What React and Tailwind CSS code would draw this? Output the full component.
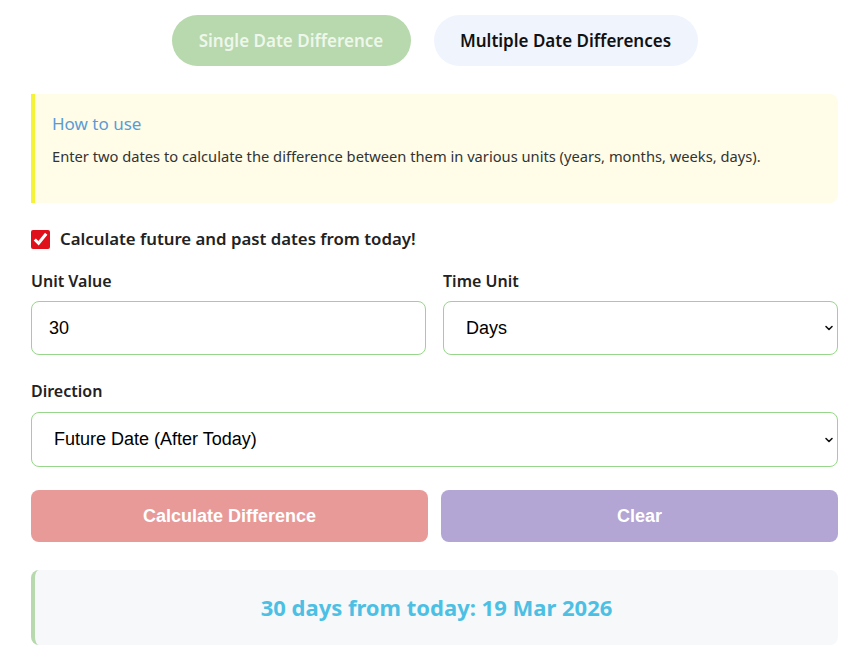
import { useState } from 'react'

const ui = { fontFamily: '"Noto Sans", "Open Sans", sans-serif' }
const arial = { fontFamily: '"Liberation Sans", Arial, sans-serif' }

function Chevron() {
  return (
    <svg width="10" height="10" viewBox="0 0 10 10" className="absolute right-[4px] top-1/2 -translate-y-1/2 pointer-events-none">
      <path d="M2 3.5 L5 6.5 L8 3.5" fill="none" stroke="#111" strokeWidth="1.6" strokeLinecap="round" strokeLinejoin="round" />
    </svg>
  )
}

export default function App() {
  const [checked, setChecked] = useState(true)

  return (
    <div className="min-h-[663px] bg-white text-[#333] pl-[31px] pr-[29px]" style={ui}>
      <div className="flex justify-center gap-[23px] pt-[15px]">
        <button className="w-[239px] h-[51px] rounded-full bg-[#b8d8ad] text-[#eef7eb] text-[17px] font-semibold">
          Single Date Difference
        </button>
        <button className="w-[264px] h-[51px] rounded-full bg-[#f0f4fd] text-[#111] text-[17px] font-semibold">
          Multiple Date Differences
        </button>
      </div>

      <div className="mt-[28px] h-[109px] bg-[#fffde8] border-l-4 border-[#f5f23a] rounded-r-lg pl-[17px] pt-[18px]">
        <h3 className="text-[17px] text-[#5b9bd5] leading-[24px]">How to use</h3>
        <p className="mt-[10px] text-[14.7px] text-[#333] leading-[20px]">
          Enter two dates to calculate the difference between them in various units (years, months, weeks, days).
        </p>
      </div>

      <label className="mt-[25px] flex items-center gap-[10px] h-[22px]">
        <input
          type="checkbox"
          checked={checked}
          onChange={() => setChecked(!checked)}
          className="w-[19px] h-[19px] accent-[#e0101a]"
        />
        <span className="text-[16.8px] font-semibold text-[#222]">Calculate future and past dates from today!</span>
      </label>

      <div className="mt-[20px] grid grid-cols-2 gap-[17px]">
        <div>
          <div className="text-[16px] font-semibold text-[#222] leading-[22px]">Unit Value</div>
          <input
            defaultValue="30"
            className="mt-[9px] w-full h-[54px] rounded-lg border border-[#98d68b] px-[17px] text-[18px] text-black outline-none"
            style={arial}
          />
        </div>
        <div>
          <div className="text-[16px] font-semibold text-[#222] leading-[22px]">Time Unit</div>
          <div className="relative mt-[9px]">
            <select
              defaultValue="Days"
              className="appearance-none w-full h-[54px] rounded-lg border border-[#98d68b] bg-white px-[22px] text-[18px] text-black outline-none"
              style={arial}
            >
              <option>Days</option>
              <option>Weeks</option>
              <option>Months</option>
              <option>Years</option>
            </select>
            <Chevron />
          </div>
        </div>
      </div>

      <div className="mt-[25px] text-[16px] font-semibold text-[#222] leading-[22px]">Direction</div>
      <div className="relative mt-[10px]">
        <select
          className="appearance-none w-full h-[55px] rounded-lg border border-[#98d68b] bg-white px-[22px] text-[18px] text-black outline-none"
          style={arial}
        >
          <option>Future Date (After Today)</option>
          <option>Past Date (Before Today)</option>
        </select>
        <Chevron />
      </div>

      <div className="mt-[23px] grid grid-cols-2 gap-[13px]">
        <button className="h-[52px] rounded-lg bg-[#e89a99] text-white text-[18px] font-bold" style={arial}>
          Calculate Difference
        </button>
        <button className="h-[52px] rounded-lg bg-[#b3a6d4] text-white text-[18px] font-bold" style={arial}>
          Clear
        </button>
      </div>

      <div className="mt-[28px] h-[75px] bg-[#f7f8fa] border-l-4 border-[#b8d8ad] rounded-lg flex items-center justify-center">
        <span className="text-[22px] font-bold text-[#4cc0e4]">30 days from today: 19 Mar 2026</span>
      </div>
    </div>
  )
}
